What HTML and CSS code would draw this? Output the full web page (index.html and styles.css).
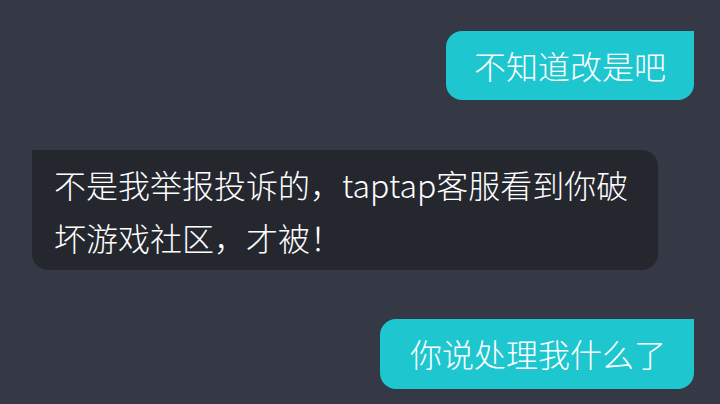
FILE: index.html
```html
<!DOCTYPE html>
<html>
  <head>
    <title>Chat</title>
    <link rel="stylesheet" href="styles.css">
  </head>
  <body>

    <main class="chat">
      <div class="message message-out">
        <p class="bubble">不知道改是吧</p>
      </div>

      <div class="message message-in">
        <p class="bubble">不是我举报投诉的，taptap客服看到你破坏游戏社区，才被！</p>
      </div>

      <div class="message message-out">
        <p class="bubble bubble-last">你说处理我什么了</p>
      </div>
    </main>

  </body>
</html>
```

FILE: styles.css
```css
*,
*:before,
*:after {
  box-sizing: border-box;
}

html,
body {
  height: 100%;
}

body {
  margin: 0px;
  background: #343945;
  color: #fff;
  font-family: 'Noto Sans CJK SC', 'Noto Sans', sans-serif;
  overflow: hidden;
}

.chat {
  display: flex;
  flex-flow: column;
  padding: 31px 26px 0px 32px;
}

.message {
  display: flex;
}
.message-out {
  justify-content: flex-end;
}
.message-in {
  margin-top: 50px;
  margin-bottom: 49px;
}

.bubble {
  margin: 0px;
  font-size: 32px;
  font-weight: 300;
  line-height: 53px;
  border-radius: 16px;
}

.message-out .bubble {
  background: #1ec7cf;
  padding: 8px 28px;
  border-top-right-radius: 0px;
}
.message-out .bubble-last {
  padding: 8px 28px 9px 30px;
}

.message-in .bubble {
  background: #25272f;
  max-width: 626px;
  padding: 8px 24px 6px 22px;
  border-top-left-radius: 0px;
}
```
